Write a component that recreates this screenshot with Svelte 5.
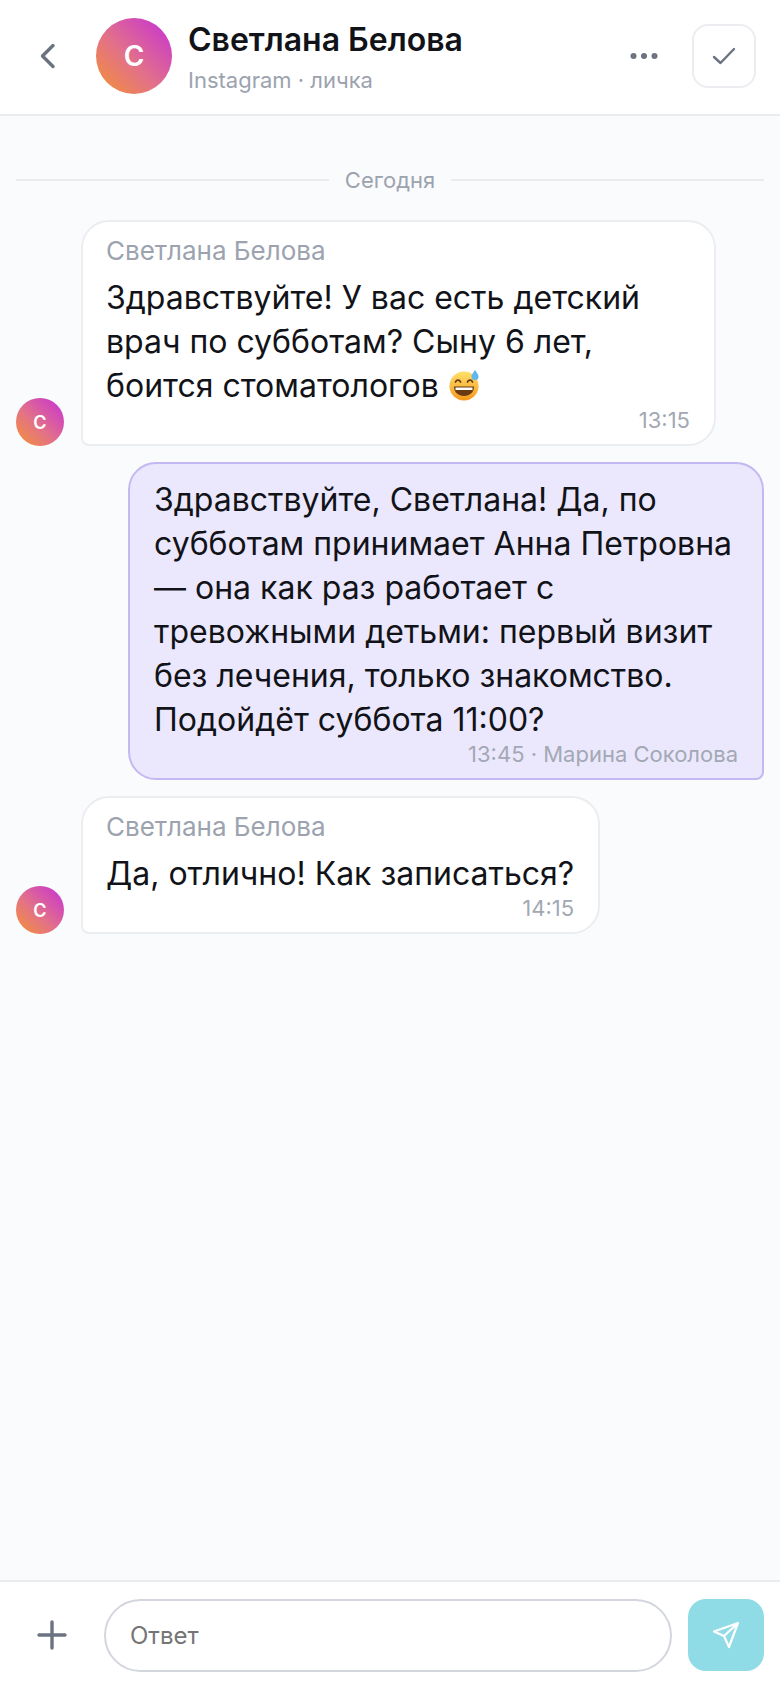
<script>
  const name = 'Светлана Белова';
</script>

<div class="screen">
  <header class="header">
    <button class="back" aria-label="Назад">
      <svg width="28" height="28" viewBox="0 0 28 28" fill="none"><path d="M19 3.500 8.500 14 19 24.500" stroke="#6b7280" stroke-width="3.400" stroke-linecap="round" stroke-linejoin="round"/></svg>
    </button>
    <div class="avatar big">С</div>
    <div class="who">
      <div class="title">{name}</div>
      <div class="sub">Instagram · личка</div>
    </div>
    <button class="more" aria-label="Ещё">
      <svg width="28" height="8" viewBox="0 0 28 8" fill="#6b7280"><circle cx="3.500" cy="4" r="3"/><circle cx="14" cy="4" r="3"/><circle cx="24.500" cy="4" r="3"/></svg>
    </button>
    <button class="check" aria-label="Готово">
      <svg width="24" height="18" viewBox="0 0 24 18" fill="none"><path d="M2 10 8.500 16 22 2" stroke="#6b7280" stroke-width="2.400" stroke-linecap="round" stroke-linejoin="round"/></svg>
    </button>
  </header>

  <main class="chat">
    <div class="day"><span>Сегодня</span></div>

    <div class="row in">
      <div class="avatar small">С</div>
      <div class="bubble first">
        <div class="author">{name}</div>
        <div class="text">Здравствуйте! У вас есть детский врач по субботам? Сыну 6 лет, боится стоматологов <svg class="emoji" viewBox="0 0 32 32"><defs><linearGradient id="face" x1="0" y1="0" x2="0" y2="1"><stop offset="0" stop-color="#ffe06a"/><stop offset="1" stop-color="#f59a1c"/></linearGradient></defs><circle cx="16" cy="17" r="14.500" fill="url(#face)"/><path d="M6 17.500h20c0 6-4.500 9.500-10 9.500S6 23.500 6 17.500Z" fill="#6b3a12"/><path d="M7.500 18.500h17v2.500h-17Z" fill="#fff"/><path d="M7.500 13c1-2.500 4-2.500 5 0M19.500 13c1-2.500 4-2.500 5 0" stroke="#6b3a12" stroke-width="1.800" fill="none" stroke-linecap="round"/><path d="M27 1c2 3 3.500 4.500 3.500 6.500a3.500 3.500 0 0 1-7 0C23.500 5.500 25 4 27 1Z" fill="#5cb8ee"/></svg></div>
        <div class="meta">13:15</div>
      </div>
    </div>

    <div class="row out">
      <div class="bubble mine">
        <div class="text">Здравствуйте, Светлана! Да, по субботам принимает Анна Петровна — она как раз работает с тревожными детьми: первый визит без лечения, только знакомство. Подойдёт суббота 11:00?</div>
        <div class="meta">13:45 · Марина Соколова</div>
      </div>
    </div>

    <div class="row in">
      <div class="avatar small">С</div>
      <div class="bubble">
        <div class="author">{name}</div>
        <div class="text">Да, отлично! Как записаться?</div>
        <div class="meta">14:15</div>
      </div>
    </div>
  </main>

  <footer class="composer">
    <button class="plus" aria-label="Добавить">
      <svg width="32" height="32" viewBox="0 0 32 32" fill="none"><path d="M16 3v26M3 16h26" stroke="#6b7280" stroke-width="3.400" stroke-linecap="round"/></svg>
    </button>
    <div class="input">Ответ</div>
    <button class="send" aria-label="Отправить">
      <svg width="28" height="28" viewBox="0 0 28 28" fill="none"><path d="M26 2 2 10.500 12 15 17 26ZM26 2 12 15" stroke="#fff" stroke-width="2.200" stroke-linejoin="round" stroke-linecap="round"/></svg>
    </button>
  </footer>
</div>

<style>
  :global(body) {
    margin: 0;
    background: #fafbfd;
  }

  .screen {
    width: 780px;
    height: 1688px;
    display: flex;
    flex-direction: column;
    font-family: Inter, "Liberation Sans", sans-serif;
    color: #111318;
    background: #fafbfd;
  }

  button {
    border: 0;
    background: none;
    padding: 0;
    display: flex;
    align-items: center;
    justify-content: center;
  }

  .header {
    height: 116px;
    box-sizing: border-box;
    flex-shrink: 0;
    display: flex;
    align-items: center;
    background: #fff;
    border-bottom: 2px solid #e9ebef;
    padding: 0 24px 2px 34px;
  }

  .back {
    width: 28px;
    height: 28px;
    margin-right: 34px;
  }

  .avatar {
    flex-shrink: 0;
    border-radius: 50%;
    display: flex;
    align-items: center;
    justify-content: center;
    color: #fff;
    font-weight: 600;
    background: linear-gradient(45deg, #f59331 0%, #e2708a 45%, #c530d6 100%);
  }

  .big {
    width: 76px;
    height: 76px;
    font-size: 28px;
  }

  .small {
    width: 48px;
    height: 48px;
    font-size: 18px;
  }

  .who {
    flex: 1;
    margin-left: 16px;
    margin-top: 2px;
  }

  .title {
    font-size: 32px;
    font-weight: 600;
    line-height: 40px;
  }

  .sub {
    font-size: 22px;
    line-height: 28px;
    margin-top: 6px;
    color: #9ca3af;
  }

  .more {
    width: 28px;
    margin-right: 34px;
  }

  .check {
    width: 64px;
    height: 64px;
    box-sizing: border-box;
    border: 2px solid #ebedf0;
    border-radius: 16px;
  }

  .chat {
    flex: 1;
    padding: 50px 16px 0;
    display: flex;
    flex-direction: column;
  }

  .day {
    display: flex;
    align-items: center;
    gap: 16px;
    height: 28px;
    margin-bottom: 26px;
    font-size: 22px;
    color: #9ca3af;
  }

  .day::before,
  .day::after {
    content: '';
    flex: 1;
    height: 2px;
    background: #e9ebef;
  }

  .row {
    display: flex;
    align-items: flex-end;
    margin-bottom: 16px;
  }

  .row.in {
    gap: 17px;
  }

  .row.out {
    justify-content: flex-end;
  }

  .bubble {
    box-sizing: border-box;
    background: #fff;
    border: 2px solid #ebedf0;
    border-radius: 28px 28px 28px 8px;
    padding: 13px 24px 10px 23px;
  }

  .first {
    width: 635px;
  }

  .mine {
    width: 636px;
    padding-top: 14px;
    padding-left: 24px;
    background: #ebe8fd;
    border-color: #c4b8f2;
    border-radius: 28px 28px 8px 28px;
  }

  .author {
    font-size: 26px;
    line-height: 32px;
    margin-bottom: 9px;
    color: #9ca3af;
  }

  .text {
    font-size: 32px;
    line-height: 44px;
  }

  .meta {
    font-size: 22px;
    line-height: 28px;
    margin-top: -2px;
    text-align: right;
    color: #a3a8b4;
  }

  .emoji {
    width: 32px;
    height: 32px;
    vertical-align: -4px;
  }

  .composer {
    height: 108px;
    flex-shrink: 0;
    box-sizing: border-box;
    display: flex;
    align-items: center;
    gap: 16px;
    padding: 0 16px 0 36px;
    background: #fff;
    border-top: 2px solid #e9ebef;
  }

  .plus {
    width: 32px;
    height: 32px;
    margin-right: 20px;
  }

  .input {
    flex: 1;
    height: 73px;
    box-sizing: border-box;
    display: flex;
    align-items: center;
    padding: 0 24px;
    border: 2px solid #d3d7dd;
    border-radius: 37px;
    font-size: 24px;
    color: #757575;
  }

  .send {
    width: 76px;
    height: 72px;
    border-radius: 18px;
    background: #8fdbe6;
  }
</style>
